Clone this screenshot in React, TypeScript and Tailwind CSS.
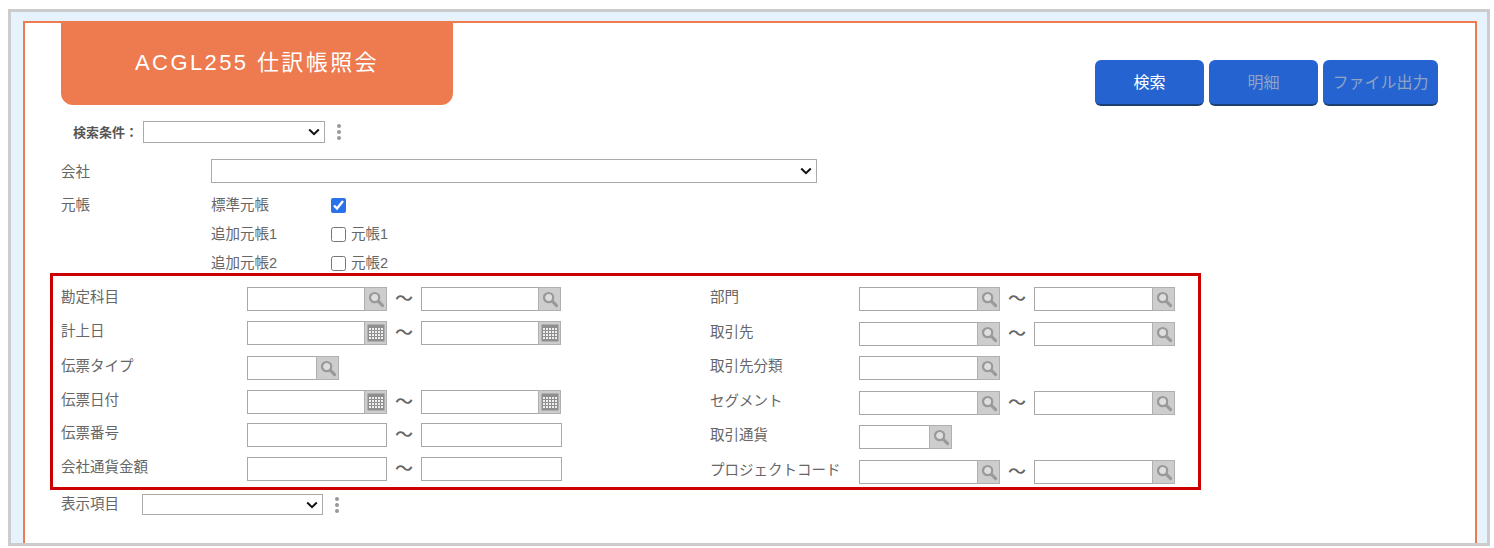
const font = "font-['Liberation_Sans','Noto_Sans_CJK_JP',sans-serif]";

function SearchIcon() {
  return (
    <svg viewBox="0 0 18 18" className="h-[18px] w-[18px]" fill="none">
      <circle cx="7.6" cy="7.6" r="4.6" stroke="#999999" strokeWidth="2.2" fill="#dedede" />
      <path d="M11.4 11.4l4.2 4.2" stroke="#999999" strokeWidth="3" strokeLinecap="round" />
    </svg>
  );
}

function CalendarIcon() {
  return (
    <svg viewBox="0 0 18 18" className="h-[18px] w-[18px]" fill="none">
      <rect x="0.5" y="0.5" width="17" height="17" fill="#8f8f8f" />
      <g fill="#eeeeee">
        {[4, 7, 10, 13].map((y) =>
          [2, 5, 8, 11, 14].map((x) => <rect key={`${x}-${y}`} x={x} y={y} width="2" height="2" />)
        )}
      </g>
    </svg>
  );
}

function Dots() {
  return (
    <div className="flex flex-col gap-[2px]">
      <span className="h-[4px] w-[4px] rounded-full bg-[#999]" />
      <span className="h-[4px] w-[4px] rounded-full bg-[#999]" />
      <span className="h-[4px] w-[4px] rounded-full bg-[#999]" />
    </div>
  );
}

function Select({ width }: { width: string }) {
  return (
    <div className={`relative h-full ${width}`}>
      <select className="h-full w-full appearance-none border border-[#aaaaaa] bg-white" />
      <svg
        viewBox="0 0 12 8"
        className="pointer-events-none absolute top-1/2 right-[5px] h-[8px] w-[12px] -translate-y-1/2"
        fill="none"
      >
        <path d="M1.2 1.5L6 6.2l4.8-4.7" stroke="#111" strokeWidth="2" />
      </svg>
    </div>
  );
}

type Kind = 'search' | 'calendar' | 'plain';

function Field({ kind, width }: { kind: Kind; width: string }) {
  if (kind === 'plain') {
    return <input className={`h-[24px] border border-[#a8a8a8] bg-white ${width}`} />;
  }
  return (
    <div className="flex h-[24px]">
      <input className={`h-full border border-r-0 border-[#a8a8a8] bg-white ${width}`} />
      <div className="flex h-full w-[23px] items-center justify-center border border-[#b0b0b0] bg-[#cdcdcd]">
        {kind === 'search' ? <SearchIcon /> : <CalendarIcon />}
      </div>
    </div>
  );
}

type Row = { label: string; kind: Kind; first: string; second?: string; top: string };

function FormRow({ row, labelWidth }: { row: Row; labelWidth: string }) {
  return (
    <div className={`flex h-[24px] items-center ${row.top}`}>
      <span className={`${labelWidth} pb-[2px] whitespace-nowrap`}>{row.label}</span>
      <Field kind={row.kind} width={row.first} />
      {row.second && (
        <>
          <span className="w-[34px] text-center text-[18px] leading-none font-medium text-[#666]">～</span>
          <Field kind={row.kind} width={row.second} />
        </>
      )}
    </div>
  );
}

const leftRows: Row[] = [
  { label: '勘定科目', kind: 'search', first: 'w-[117px]', second: 'w-[117px]', top: '' },
  { label: '計上日', kind: 'calendar', first: 'w-[117px]', second: 'w-[117px]', top: 'mt-[10px]' },
  { label: '伝票タイプ', kind: 'search', first: 'w-[69px]', top: 'mt-[11px]' },
  { label: '伝票日付', kind: 'calendar', first: 'w-[117px]', second: 'w-[117px]', top: 'mt-[10px]' },
  { label: '伝票番号', kind: 'plain', first: 'w-[140px]', second: 'w-[141px]', top: 'mt-[9px]' },
  { label: '会社通貨金額', kind: 'plain', first: 'w-[140px]', second: 'w-[141px]', top: 'mt-[10px]' },
];

const rightRows: Row[] = [
  { label: '部門', kind: 'search', first: 'w-[118px]', second: 'w-[118px]', top: '' },
  { label: '取引先', kind: 'search', first: 'w-[118px]', second: 'w-[118px]', top: 'mt-[11px]' },
  { label: '取引先分類', kind: 'search', first: 'w-[118px]', top: 'mt-[10px]' },
  { label: 'セグメント', kind: 'search', first: 'w-[118px]', second: 'w-[118px]', top: 'mt-[11px]' },
  { label: '取引通貨', kind: 'search', first: 'w-[70px]', top: 'mt-[10px]' },
  { label: 'プロジェクトコード', kind: 'search', first: 'w-[118px]', second: 'w-[118px]', top: 'mt-[11px]' },
];

function ActionButton({ label, disabled, width }: { label: string; disabled?: boolean; width: string }) {
  return (
    <button
      type="button"
      className={`h-[46px] rounded-[6px] border-b-[2px] border-[#1c406f] bg-[#2563d0] pt-px text-[16px] ${width} ${disabled ? 'text-[#8fa3c4]' : 'text-white'}`}
    >
      {label}
    </button>
  );
}

function LedgerRow({ label, children, last }: { label: string; children: React.ReactNode; last?: boolean }) {
  return (
    <div className={`flex h-[29px] items-center pl-[150px] ${last ? '-mb-[5px]' : ''}`}>
      <span className="w-[120px]">{label}</span>
      {children}
    </div>
  );
}

export default function App() {
  return (
    <div className={`h-[548px] w-full overflow-hidden bg-white pt-[9px] pl-[8px] text-[14.5px] text-[#666] ${font}`}>
      <div className="flex h-[537px] w-[1482px] flex-col border-[3px] border-[#cccccc] bg-[#e6f3fc] pt-[9px] pr-[10px] pl-[12px]">
        <div className="flex-1 border-x-2 border-t-2 border-[#ee7a50] bg-white pl-[36px]">
          <div className="flex items-start justify-between pr-[37px]">
            <div className="flex h-[82px] w-[392px] items-center justify-center rounded-b-[12px] bg-[#ee7a50] pb-[4px] text-[22px] tracking-[2.4px] text-white">
              ACGL255 仕訳帳照会
            </div>
            <div className="mt-[37px] flex gap-[5px]">
              <ActionButton label="検索" width="w-[109px]" />
              <ActionButton label="明細" disabled width="w-[109px]" />
              <ActionButton label="ファイル出力" disabled width="w-[115px]" />
            </div>
          </div>

          <div className="mt-[15px] flex h-[22px] items-center pl-[12px]">
            <span className="w-[70px] pt-[2px] text-[13px] font-bold text-[#555]">検索条件：</span>
            <Select width="w-[182px]" />
            <div className="ml-[12px]">
              <Dots />
            </div>
          </div>

          <div className="mt-[16px] flex h-[24px] items-center">
            <span className="w-[150px] pt-[3px]">会社</span>
            <Select width="w-[606px]" />
          </div>

          <div className="relative mt-[8px]">
            <span className="absolute top-[4px] left-0">元帳</span>
            <LedgerRow label="標準元帳">
              <input type="checkbox" defaultChecked className="h-[15px] w-[15px] accent-[#2b72e8]" />
            </LedgerRow>
            <LedgerRow label="追加元帳1">
              <label className="flex items-center gap-[5px]">
                <input type="checkbox" className="h-[15px] w-[15px]" />
                元帳1
              </label>
            </LedgerRow>
            <LedgerRow label="追加元帳2" last>
              <label className="flex items-center gap-[5px]">
                <input type="checkbox" className="h-[15px] w-[15px]" />
                元帳2
              </label>
            </LedgerRow>
          </div>

          <div className="relative -ml-[11px] flex h-[217px] w-[1151px] border-[3px] border-[#cc0000] pt-[11px] pl-[8px]">
            <div className="w-[649px]">
              {leftRows.map((row) => (
                <FormRow key={row.label} row={row} labelWidth="w-[186px]" />
              ))}
            </div>
            <div>
              {rightRows.map((row) => (
                <FormRow key={row.label} row={row} labelWidth="w-[149px]" />
              ))}
            </div>
          </div>

          <div className="mt-[4px] flex h-[21px] items-center">
            <span className="w-[81px]">表示項目</span>
            <Select width="w-[181px]" />
            <div className="ml-[12px]">
              <Dots />
            </div>
          </div>
        </div>
      </div>
    </div>
  );
}
